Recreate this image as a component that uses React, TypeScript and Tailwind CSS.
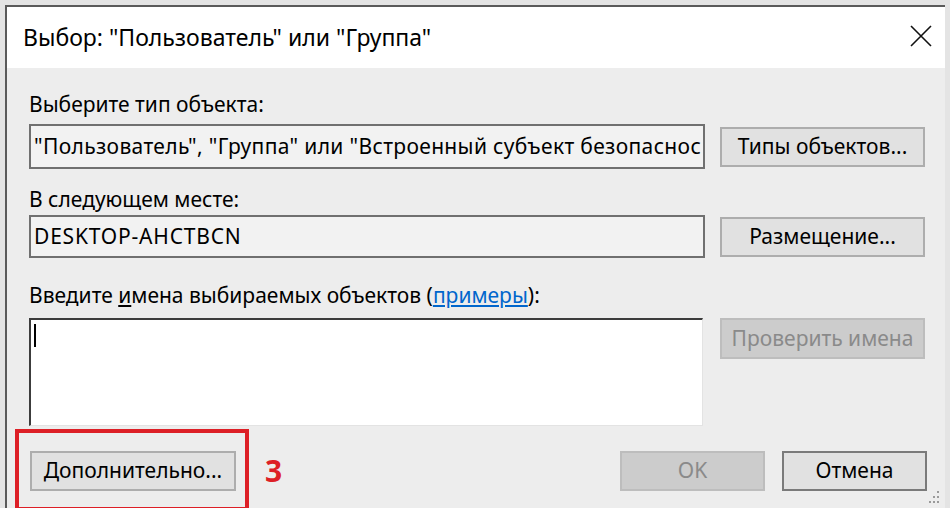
import React from "react";

const font = "font-['Noto_Sans','Open_Sans',sans-serif]";

function Btn({
  children,
  disabled,
  strong,
  className = "",
}: {
  children: React.ReactNode;
  disabled?: boolean;
  strong?: boolean;
  className?: string;
}) {
  const look = disabled
    ? "bg-[#cccccc] border-[#bdbdbd] text-[#8a8a8a]"
    : strong
      ? "bg-[#e1e1e1] border-[#7a7a7a] text-black"
      : "bg-[#e1e1e1] border-[#adadad] text-black";
  return (
    <div
      className={`flex h-[40px] items-center justify-center border-2 text-[21px] ${look} ${className}`}
    >
      {children}
    </div>
  );
}

function Grip() {
  return (
    <svg width="16" height="16" viewBox="0 0 16 16" className="absolute bottom-[3px] right-[4px]">
      {[
        [12, 2],
        [8, 7],
        [12, 7],
        [4, 12],
        [8, 12],
        [12, 12],
      ].map(([x, y]) => (
        <rect key={`${x}-${y}`} x={x} y={y} width="2" height="2" fill="#9a9a9a" />
      ))}
    </svg>
  );
}

export default function App() {
  return (
    <div className={`h-[508px] w-[950px] overflow-hidden bg-[#e4e4e4] pl-[5px] pt-[5px] ${font}`}>
      <div className="relative flex h-[503px] w-[940px] flex-col border-l-2 border-t-2 border-[#5a5a5a]">
        {/* title bar */}
        <div className="flex h-[61px] items-center justify-between bg-white pl-[16px] pr-[12px]">
          <span className="text-[23px] leading-none text-black">
            Выбор: "Пользователь" или "Группа"
          </span>
          <svg width="22" height="22" viewBox="0 0 22 22" className="mr-[1px] mt-[-4px]">
            <path d="M1 1 L21 21 M21 1 L1 21" stroke="#111" strokeWidth="1.6" />
          </svg>
        </div>

        {/* body */}
        <div className="relative flex flex-1 flex-col bg-[#ededed] pl-[22px] pr-[18px] pt-[22px] text-black">
          <div className="h-[28px] text-[21px] leading-[28px]">Выберите тип объекта:</div>
          <div className="mt-[6px] flex items-center gap-[15px]">
            <div className="flex h-[45px] w-[676px] items-center overflow-hidden whitespace-nowrap border-2 border-[#707070] bg-[#f2f2f2] pl-[3px] text-[21px] tracking-[0.35px]">
              "Пользователь", "Группа" или "Встроенный субъект безопаснос
            </div>
            <Btn className="w-[205px]">Типы объектов...</Btn>
          </div>

          <div className="mt-[16px] h-[28px] text-[21px] leading-[28px]">В следующем месте:</div>
          <div className="mt-[2px] flex items-center gap-[15px]">
            <div className="flex h-[43px] w-[676px] items-center overflow-hidden whitespace-nowrap border-2 border-[#707070] bg-[#f2f2f2] pl-[3px] text-[21px] tracking-[0.8px]">
              DESKTOP-AHCTBCN
            </div>
            <Btn className="w-[205px]">Размещение...</Btn>
          </div>

          <div className="mt-[23px] h-[28px] text-[21px] leading-[28px]">
            Введите <span className="underline">и</span>мена выбираемых объектов (
            <span className="text-[#0066cc] underline">примеры</span>):
          </div>
          <div className="mt-[9px] flex items-start gap-[17px]">
            <div className="h-[108px] w-[674px] border-b border-l-2 border-r border-t-2 border-b-[#e3e3e3] border-l-[#3c3c3c] border-r-[#e3e3e3] border-t-[#3c3c3c] bg-white pl-[3px] pt-[4px]">
              <div className="h-[23px] w-[2px] bg-black" />
            </div>
            <Btn disabled className="h-[41px] w-[205px]">
              Проверить имена
            </Btn>
          </div>

          <div className="mt-[25px] flex items-center">
            <div className="relative">
              <Btn className="ml-[1px] w-[206px]">Дополнительно...</Btn>
              <div className="absolute left-[-14px] top-[-22px] h-[82px] w-[234px] border-[4px] border-[#dd1f26]" />
            </div>
            <span className="ml-[29px] text-[30px] font-bold leading-none text-[#dd1f26]">3</span>
            <div className="flex-1" />
            <Btn disabled className="w-[145px]">
              OK
            </Btn>
            <Btn strong className="ml-[17px] w-[145px]">
              Отмена
            </Btn>
          </div>
          <Grip />
        </div>
      </div>
    </div>
  );
}
